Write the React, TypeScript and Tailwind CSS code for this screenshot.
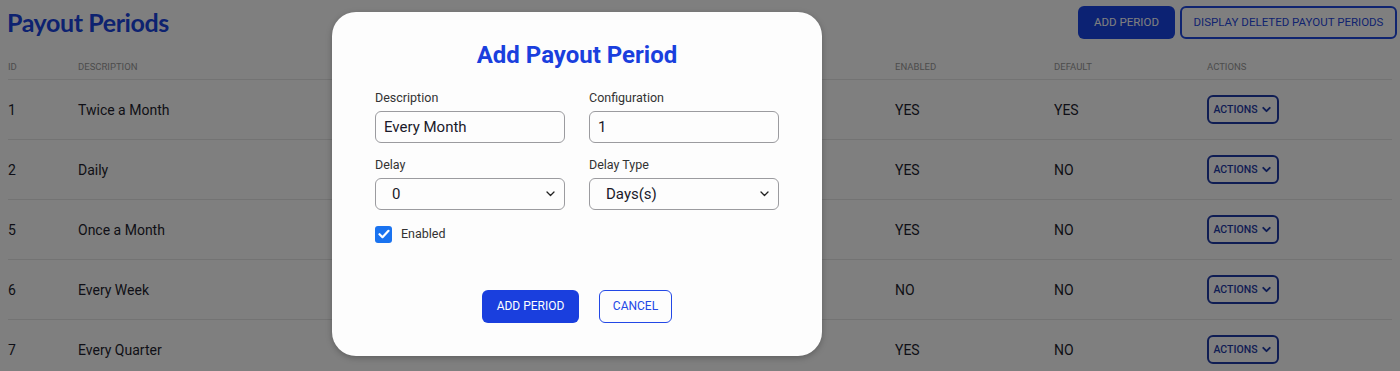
import { ChevronDown } from "lucide-react"

const rows = [
  { id: 1, description: "Twice a Month", enabled: "YES", isDefault: "YES" },
  { id: 2, description: "Daily", enabled: "YES", isDefault: "NO" },
  { id: 5, description: "Once a Month", enabled: "YES", isDefault: "NO" },
  { id: 6, description: "Every Week", enabled: "NO", isDefault: "NO" },
  { id: 7, description: "Every Quarter", enabled: "YES", isDefault: "NO" },
]

// the middle columns sit behind the dialog
const cols = "grid grid-cols-[70px_817px_159px_153px_1fr]"

function SelectChevron() {
  return (
    <svg className="absolute right-[9px] top-1/2 -translate-y-1/2" width="9" height="6" viewBox="0 0 9 6" fill="none">
      <path d="M1 1l3.5 3.5L8 1" stroke="#222" strokeWidth="1.3" strokeLinecap="round" strokeLinejoin="round" />
    </svg>
  )
}

export default function App() {
  return (
    <div className="relative w-[1400px] h-[371px] overflow-hidden bg-white font-['Roboto',sans-serif] text-[#1e1e2e]">
      {/* Page behind the dialog */}
      <div className="px-2">
        <div className="-mr-[5px] flex h-[45px] items-center justify-between">
          <h1 className="-ml-[1px] text-[25px] font-bold tracking-[-0.4px] text-[#1a44e0] font-['Lato',sans-serif]">Payout Periods</h1>
          <div className="flex gap-[5px]">
            <button className="h-[33px] w-[97px] rounded-md bg-[#1845e6] text-[11.5px] text-white">
              ADD PERIOD
            </button>
            <button className="h-[33px] w-[217px] rounded-md border-2 border-[#1f48e0] text-[11.5px] text-[#1f48e0]">
              DISPLAY DELETED PAYOUT PERIODS
            </button>
          </div>
        </div>

        <div className={`${cols} h-[35px] items-end border-b border-[#e6e6e6] pb-[5px] text-[9.5px] uppercase text-[#999]`}>
          <span>ID</span>
          <span>Description</span>
          <span>Enabled</span>
          <span>Default</span>
          <span>Actions</span>
        </div>

        {rows.map((r) => (
          <div key={r.id} className={`${cols} h-[60px] items-center border-b border-[#e6e6e6] pt-[2px] text-[14px]`}>
            <span>{r.id}</span>
            <span>{r.description}</span>
            <span>{r.enabled}</span>
            <span>{r.isDefault}</span>
            <span>
              <button className="-mt-[2px] flex h-[29px] w-[72px] items-center justify-center gap-[2px] rounded-md border-2 border-[#1f3aa8] text-[10.5px] font-medium text-[#1f3aa8]">
                ACTIONS
                <ChevronDown size={13} strokeWidth={3.5} />
              </button>
            </span>
          </div>
        ))}
      </div>

      {/* Overlay */}
      <div className="absolute inset-0 bg-black/50" />

      {/* Dialog */}
      <div className="absolute left-[332px] top-[12px] w-[490px] h-[344px] rounded-[24px] bg-[#fdfdfd] px-[43px] pt-[27px] shadow-[0_2px_6px_rgba(0,0,0,0.25)]">
        <h2 className="text-center text-[24px] font-bold leading-[32px] text-[#1a3fde]">Add Payout Period</h2>

        <div className="mt-[19px] grid grid-cols-2 gap-x-[24px]">
          <div>
            <label className="block text-[12.5px] leading-[16px] text-[#333]">Description</label>
            <div className="mt-[5px] flex h-[32px] items-center rounded-md border-[1.5px] border-[#9b9b9f] px-[8px] text-[15px] text-[#1a1a2a]">
              Every Month
            </div>
          </div>
          <div>
            <label className="block text-[12.5px] leading-[16px] text-[#333]">Configuration</label>
            <div className="mt-[5px] flex h-[32px] items-center rounded-md border-[1.5px] border-[#9b9b9f] px-[8px] text-[15px] text-[#1a1a2a]">
              1
            </div>
          </div>

          <div className="mt-[14px]">
            <label className="block text-[12.5px] leading-[16px] text-[#333]">Delay</label>
            <div className="relative mt-[5px] flex h-[32px] items-center rounded-md border-[1.5px] border-[#9b9b9f] px-[16px] text-[15px] text-[#1a1a2a]">
              0
              <SelectChevron />
            </div>
          </div>
          <div className="mt-[14px]">
            <label className="block text-[12.5px] leading-[16px] text-[#333]">Delay Type</label>
            <div className="relative mt-[5px] flex h-[32px] items-center rounded-md border-[1.5px] border-[#9b9b9f] px-[16px] text-[15px] text-[#1a1a2a]">
              Days(s)
              <SelectChevron />
            </div>
          </div>
        </div>

        <div className="mt-[15px] flex items-center gap-[9px]">
          <span className="flex h-[17px] w-[17px] items-center justify-center rounded-[3px] bg-[#1a73f0]">
            <svg width="12" height="10" viewBox="0 0 12 10" fill="none">
              <path d="M1.5 5.2l3 3L10.5 1.8" stroke="#fff" strokeWidth="2.2" strokeLinecap="round" strokeLinejoin="round" />
            </svg>
          </span>
          <span className="text-[12.5px] text-[#333]">Enabled</span>
        </div>

        <div className="mt-[46px] flex justify-center gap-[20px]">
          <button className="h-[33px] w-[97px] rounded-md bg-[#1a3fde] text-[12px] text-white">ADD PERIOD</button>
          <button className="h-[33px] w-[73px] rounded-md border-[1.5px] border-[#2348e6] text-[12px] text-[#2348e6]">
            CANCEL
          </button>
        </div>
      </div>
    </div>
  )
}
